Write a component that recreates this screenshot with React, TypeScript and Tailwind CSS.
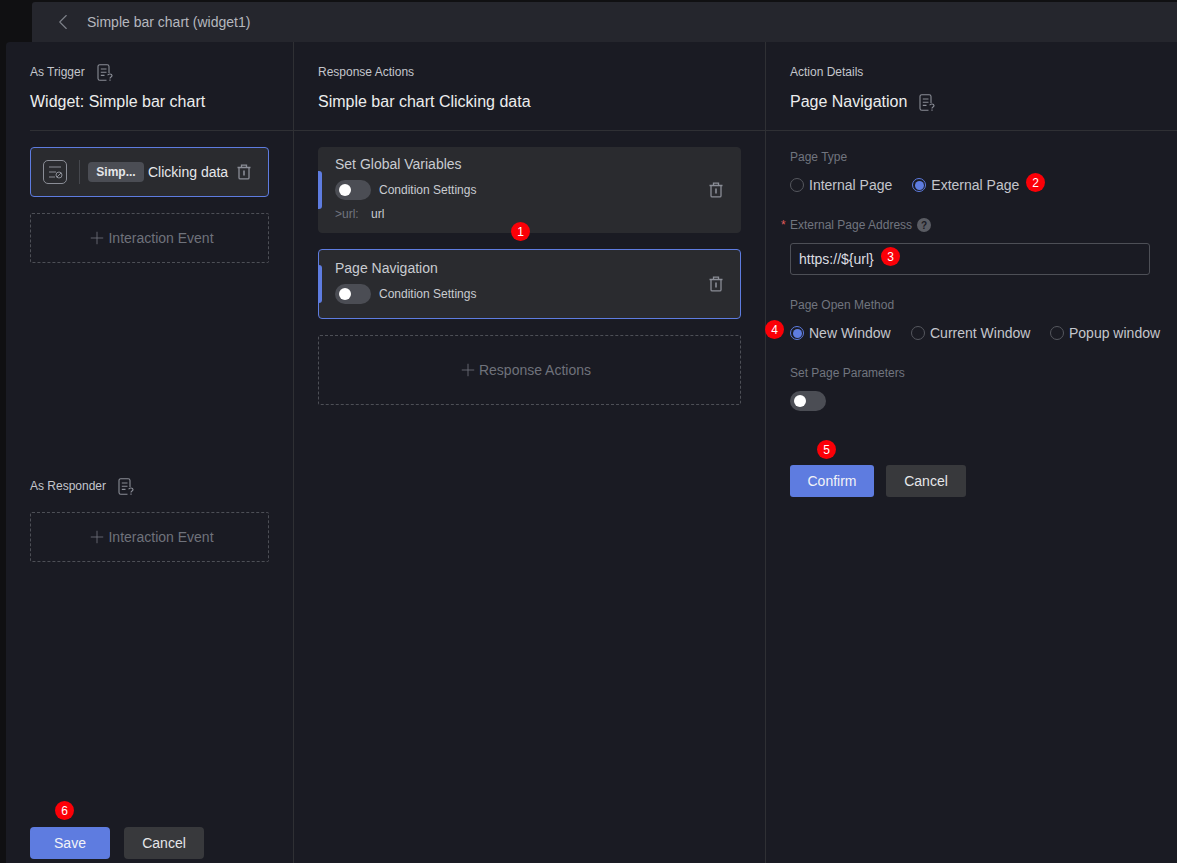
import { ChevronLeft, Plus } from "lucide-react";

function DocHelpIcon() {
  return (
    <svg width="16" height="17" viewBox="0 0 16 17" fill="none" stroke="#8a8d96" strokeWidth="1.1" aria-hidden>
      <path d="M12 9V2.5A1.8 1.8 0 0 0 10.2 0.7H2.8A1.8 1.8 0 0 0 1 2.5v12a1.8 1.8 0 0 0 1.8 1.8h6.7" />
      <path d="M3.8 5h5.7M3.8 8.2h5.7M3.8 11.4h3.7" />
      <path d="M10.8 11.2c.2-1.6 4-1.7 4.2.3.1 1.5-2 1.4-2 2.9" strokeWidth="1.2" />
      <path d="M13 15.4v1.3" strokeWidth="1.2" />
    </svg>
  );
}

function TrashIcon() {
  return (
    <svg width="16" height="16" viewBox="0 0 16 16" fill="none" stroke="#8a8d96" strokeWidth="1.3" aria-hidden>
      <path d="M1.5 3.5h13M5.5 3.5V1.2h5v2.3" />
      <path d="M3 3.5v10.2c0 .7.5 1.2 1.2 1.2h7.6c.7 0 1.2-.5 1.2-1.2V3.5" />
      <path d="M8 6.5v5" strokeWidth="1.6" />
    </svg>
  );
}

function EventIcon() {
  return (
    <svg width="24" height="24" viewBox="0 0 24 24" fill="none" stroke="#8a8d96" strokeWidth="1" aria-hidden>
      <rect x="0.5" y="0.5" width="23" height="23" rx="4.5" />
      <path d="M6 7h12M6 12h7M6 17h6" />
      <circle cx="16" cy="15" r="3" />
      <path d="M14 17l4-4" />
    </svg>
  );
}

function Toggle() {
  return (
    <span className="flex h-5 w-9 shrink-0 items-center rounded-full bg-[#4b4d54] pl-1">
      <span className="h-3 w-3 rounded-full bg-white" />
    </span>
  );
}

function Radio({ label, checked, className }: { label: string; checked?: boolean; className?: string }) {
  return (
    <span className={`flex items-center gap-[5px] text-[14px] leading-5 text-[#c4c6cc] ${className ?? ""}`}>
      <span
        className={`flex h-[14px] w-[14px] items-center justify-center rounded-full border ${
          checked ? "border-[#5e7ce0]" : "border-[#55575e]"
        }`}
      >
        {checked && <span className="h-[9px] w-[9px] rounded-full bg-[#5e7ce0]" />}
      </span>
      {label}
    </span>
  );
}

function AddBox({ label, className }: { label: string; className: string }) {
  return (
    <div
      className={`flex items-center justify-center gap-px rounded-[2px] border border-dashed border-[#4d4f56] text-[14px] text-[#6f727b] ${className}`}
    >
      <Plus className="h-5 w-5" strokeWidth={1} aria-hidden />
      {label}
    </div>
  );
}

function ActionCard({ title, active, url }: { title: string; active?: boolean; url?: boolean }) {
  return (
    <div
      className={`relative flex items-center justify-between rounded-[4px] border bg-[#2a2b2f] pr-4 pl-4 ${
        active ? "h-[70px] border-[#5e7ce0]" : "h-[86px] border-[#2a2b2f]"
      }`}
    >
      <span className="absolute top-1/2 left-[-1px] h-[38px] w-1 -translate-y-1/2 rounded-r-[3px] bg-[#5e7ce0]" />
      <div className={`flex flex-col self-start ${active ? "pt-2" : "pt-[6px]"}`}>
        <span className="text-[14px] leading-5 text-[#c9cbd1]">{title}</span>
        <div className="mt-[6px] flex items-center gap-2">
          <Toggle />
          <span className="text-[12px] text-[#c9cbd1]">Condition Settings</span>
        </div>
        {url && (
          <div className="mt-[6px] flex text-[12px] leading-4">
            <span className="w-[36px] text-[#71757f]">&gt;url:</span>
            <span className="text-[#c9cbd1]">url</span>
          </div>
        )}
      </div>
      <TrashIcon />
    </div>
  );
}

function Marker({ n, className }: { n: number; className: string }) {
  return (
    <span
      className={`absolute flex h-[19px] w-[19px] items-center justify-center rounded-full bg-[#fb0007] text-[12px] text-white ${className}`}
    >
      {n}
    </span>
  );
}

function FieldLabel({ children }: { children: React.ReactNode }) {
  return <div className="text-[12px] leading-4 text-[#71757f]">{children}</div>;
}

export default function App() {
  return (
    <div
      className="relative h-[863px] w-[1177px] overflow-hidden bg-[#101012] pt-[2px]"
      style={{ fontFamily: "'Liberation Sans', Arial, sans-serif" }}
    >
      <header className="ml-8 flex h-10 items-center rounded-tl-[3px] bg-[#25262d] pl-[18px] text-[14px] text-[#b5b7be]">
        <ChevronLeft className="mr-[11px] h-[26px] w-[26px] text-[#7d8089]" strokeWidth={1} aria-hidden />
        Simple bar chart (widget1)
      </header>

      <main className="ml-[6px] flex h-[821px] rounded-tl-[4px] bg-[#1a1b23]">
        {/* trigger column */}
        <section className="flex w-[288px] flex-col border-r border-[#2f3034] pl-6">
          <div className="h-[89px] border-b border-[#2f3034] pt-[22px]">
            <div className="flex h-4 items-center gap-3 text-[12px] text-[#c4c6cc]">
              As Trigger
              <DocHelpIcon />
            </div>
            <div className="mt-[10px] text-[16px] leading-6 text-[#eceded]">Widget: Simple bar chart</div>
          </div>

          <div className="mr-6 mt-4 flex h-[50px] items-center rounded-[4px] border border-[#5e7ce0] bg-[#2a2b2f] pl-3">
            <EventIcon />
            <span className="ml-3 mr-2 h-[24px] w-px bg-[#46484e]" />
            <span className="flex h-5 w-[56px] items-center justify-center rounded-[4px] bg-[#4b4d54] text-[12px] font-bold text-[#e6e7ea]">
              Simp...
            </span>
            <span className="ml-1 text-[14px] text-[#e6e7ea]">Clicking data</span>
            <span className="ml-2">
              <TrashIcon />
            </span>
          </div>
          <AddBox label="Interaction Event" className="mr-6 mt-4 h-[50px] pl-[2px]" />

          <div className="mt-[215px] flex h-4 items-center gap-3 text-[12px] text-[#c4c6cc]">
            As Responder
            <DocHelpIcon />
          </div>
          <AddBox label="Interaction Event" className="mr-6 mt-[18px] h-[50px] pl-[2px]" />

          <div className="mt-auto mb-1 flex gap-[14px]">
            <button className="h-8 w-20 rounded-[4px] bg-[#5e7ce0] text-[14px] text-[#f2f3f7]">Save</button>
            <button className="h-8 w-20 rounded-[4px] bg-[#38393c] text-[14px] text-[#e6e7ea]">Cancel</button>
          </div>
        </section>

        {/* response actions column */}
        <section className="flex w-[472px] flex-col border-r border-[#2f3034]">
          <div className="h-[89px] border-b border-[#2f3034] pt-[22px] pl-6">
            <div className="flex h-4 items-center text-[12px] text-[#c4c6cc]">Response Actions</div>
            <div className="mt-[10px] text-[16px] leading-6 text-[#eceded]">Simple bar chart Clicking data</div>
          </div>
          <div className="flex flex-col gap-4 px-6 pt-4">
            <ActionCard title="Set Global Variables" url />
            <ActionCard title="Page Navigation" active />
            <AddBox label="Response Actions" className="h-[70px] pr-[10px]" />
          </div>
        </section>

        {/* action details column */}
        <section className="min-w-0 flex-1">
          <div className="h-[89px] border-b border-[#2f3034] pt-[22px] pl-6">
            <div className="flex h-4 items-center text-[12px] text-[#c4c6cc]">Action Details</div>
            <div className="mt-[10px] flex items-center gap-3 text-[16px] leading-6 text-[#eceded]">
              Page Navigation
              <DocHelpIcon />
            </div>
          </div>
          <div className="pt-[18px] pl-6">
            <FieldLabel>Page Type</FieldLabel>
            <div className="mt-[10px] flex h-5 items-center gap-5">
              <Radio label="Internal Page" />
              <Radio label="External Page" checked />
            </div>
            <div className="relative mt-[22px] flex items-center gap-[5px]">
              <span className="absolute left-[-9px] text-[12px] text-[#e05c5c]">*</span>
              <FieldLabel>External Page Address</FieldLabel>
              <span className="flex h-[14px] w-[14px] items-center justify-center rounded-full bg-[#5a5c63] text-[10px] font-bold text-[#1a1b23]">
                ?
              </span>
            </div>
            <div className="mt-[10px] flex h-8 w-[360px] items-center rounded-[3px] border border-[#4d4f56] pl-2 text-[14px] text-[#dcdde1]">
              https://${"{"}url{"}"}
            </div>
            <div className="mt-[22px]">
              <FieldLabel>Page Open Method</FieldLabel>
            </div>
            <div className="mt-[10px] flex h-5 items-center">
              <Radio label="New Window" checked className="w-[121px]" />
              <Radio label="Current Window" className="w-[139px]" />
              <Radio label="Popup window" />
            </div>
            <div className="mt-[22px]">
              <FieldLabel>Set Page Parameters</FieldLabel>
            </div>
            <div className="mt-[10px]">
              <Toggle />
            </div>
            <div className="mt-[54px] flex gap-3">
              <button className="h-8 w-[84px] rounded-[3px] bg-[#5e7ce0] text-[14px] text-[#f2f3f7]">Confirm</button>
              <button className="h-8 w-20 rounded-[3px] bg-[#38393c] text-[14px] text-[#e6e7ea]">Cancel</button>
            </div>
          </div>
        </section>
      </main>

      <Marker n={1} className="left-[511px] top-[222px]" />
      <Marker n={2} className="left-[1026px] top-[173px]" />
      <Marker n={3} className="left-[881px] top-[247px]" />
      <Marker n={4} className="left-[765px] top-[320px]" />
      <Marker n={5} className="left-[817px] top-[440px]" />
      <Marker n={6} className="left-[55px] top-[801px]" />
    </div>
  );
}
